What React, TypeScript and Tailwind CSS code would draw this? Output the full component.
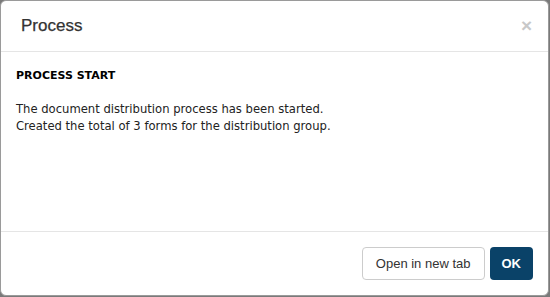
export default function App() {
  return (
    <div className="h-[297px] w-[550px] bg-[#7a7a7a]">
      <div className="flex h-[296px] w-[549px] flex-col rounded-[6px] border border-[#9a9a9a] bg-white">
        <div className="flex h-[51px] items-center justify-between border-b border-[#e5e5e5] pl-[20px] pr-[16px]">
          <h2 className="font-['Liberation_Sans',Arial,sans-serif] text-[17px] text-[#333] [-webkit-text-stroke:0.25px_#333]">Process</h2>
          <span className="mb-[2px] font-['Liberation_Sans',Arial,sans-serif] text-[19px] font-bold leading-none text-[#c8c8c8]">×</span>
        </div>
        <div className="flex-1 px-[15px] pt-[16px] font-['DejaVu_Sans',Verdana,sans-serif] text-[11px] text-black">
          <div className="font-bold">PROCESS START</div>
          <p className="mt-[16px] text-[11.6px] leading-[17px] text-[#222]">
            The document distribution process has been started.
            <br />
            Created the total of 3 forms for the distribution group.
          </p>
        </div>
        <div className="flex h-[64px] items-center justify-end gap-[5px] border-t border-[#e5e5e5] pr-[15px] font-['Liberation_Sans',Arial,sans-serif]">
          <button className="h-[33px] rounded-[4px] border border-[#ccc] bg-white px-[13px] text-[13px] text-[#333]">
            Open in new tab
          </button>
          <button className="h-[33px] rounded-[4px] bg-[#0a4268] px-[12px] text-[13px] font-bold text-white">
            OK
          </button>
        </div>
      </div>
    </div>
  );
}
